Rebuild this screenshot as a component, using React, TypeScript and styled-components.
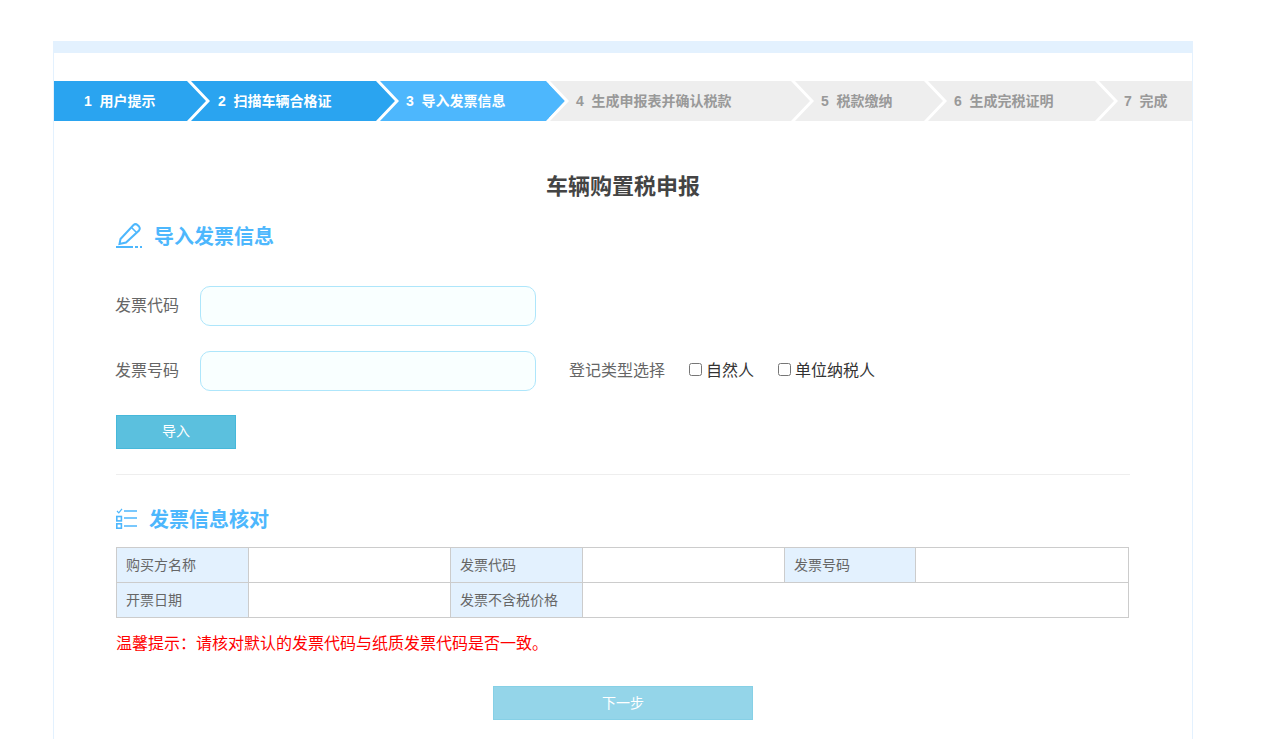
import React from "react";
import styled, { createGlobalStyle } from "styled-components";

const GlobalStyle = createGlobalStyle`
  html, body {
    margin: 0;
    padding: 0;
    background: #fff;
  }
  body {
    font-family: "Liberation Sans", "Noto Sans CJK SC", sans-serif;
    color: #333;
  }
`;

const Page = styled.div`
  box-sizing: border-box;
  width: 1140px;
  height: 698px;
  margin: 41px 0 0 53px;
  border: 1px solid #e3f1fe;
  border-width: 0 1px;
  overflow: hidden;
`;

const TopBar = styled.div`
  height: 12px;
  margin: 0 -1px;
  background: #e3f1fe;
`;

const Steps = styled.div`
  display: flex;
  height: 40px;
  margin-top: 28px;
`;

const stepColors = { done: "#2aa4f0", active: "#4db7fd", todo: "#eeeeee" };

const Step = styled.div<{ $width: number; $state: keyof typeof stepColors; $pad: number; $last?: boolean }>`
  position: relative;
  box-sizing: border-box;
  flex: 0 0 ${(p) => p.$width}px;
  padding-left: ${(p) => p.$pad}px;
  background: ${(p) => stepColors[p.$state]};
  color: ${(p) => (p.$state === "todo" ? "#999" : "#fff")};
  font-size: 14px;
  font-weight: bold;
  line-height: 40px;
  white-space: pre;

  &::after {
    content: ${(p) => (p.$last ? "none" : '""')};
    position: absolute;
    z-index: 1;
    top: 0;
    right: -22px;
    width: 25px;
    height: 40px;
    background: #fff;
    clip-path: polygon(0 0, 4px 0, 23px 50%, 4px 100%, 0 100%, 19px 50%);
  }

  &::before {
    content: ${(p) => (p.$last ? "none" : '""')};
    position: absolute;
    z-index: 1;
    top: 0;
    right: -16px;
    width: 19px;
    height: 40px;
    background: ${(p) => stepColors[p.$state]};
    clip-path: polygon(0 0, 100% 50%, 0 100%);
  }
`;

const Content = styled.div`
  padding: 0 62px;
`;

const Title = styled.h1`
  margin: 51px 0 0;
  font-size: 22px;
  font-weight: bold;
  line-height: 30px;
  color: #444;
  text-align: center;
`;

const SectionHead = styled.div<{ $gap: number; $top: number }>`
  display: flex;
  align-items: center;
  gap: ${(p) => p.$gap}px;
  height: 30px;
  margin-top: ${(p) => p.$top}px;
`;

const SectionTitle = styled.h2`
  margin: 0;
  font-size: 20px;
  font-weight: bold;
  color: #4db7fd;
`;

const FormRow = styled.div<{ $top: number }>`
  display: flex;
  align-items: center;
  height: 40px;
  margin-top: ${(p) => p.$top}px;
`;

const FieldLabel = styled.label`
  flex: 0 0 85px;
  margin-left: -1px;
  margin-bottom: 4px;
  font-size: 16px;
  color: #666;
`;

const TextInput = styled.input`
  box-sizing: border-box;
  width: 336px;
  height: 40px;
  padding: 0 12px;
  background: #f9ffff;
  border: 1px solid #aee6fb;
  border-radius: 10px;
  outline: none;
`;

const TypeLabel = styled.span`
  margin: 0 24px 4px 33px;
  font-size: 16px;
  color: #666;
`;

const CheckLabel = styled.label`
  display: flex;
  align-items: center;
  margin: 0 24px 4px 0;
  font-size: 16px;
  color: #333;
`;

const CheckBox = styled.input`
  width: 13px;
  height: 13px;
  margin: 0 4px 0 0;
`;

const ActionButton = styled.button<{ $width: number; $muted?: boolean }>`
  display: block;
  box-sizing: border-box;
  width: ${(p) => p.$width}px;
  height: 34px;
  padding: 0 0 ${(p) => (p.$muted ? 3 : 5)}px;
  background: #5bc0de;
  border: 1px solid #46b8da;
  opacity: ${(p) => (p.$muted ? 0.65 : 1)};
  color: #fff;
  font-family: inherit;
  font-size: 14px;
`;

const ImportButton = styled(ActionButton)`
  margin-top: 24px;
`;

const NextButton = styled(ActionButton)`
  margin: 31px auto 0;
`;

const Divider = styled.hr`
  width: 1014px;
  height: 1px;
  margin: 25px 0 0;
  background: #eee;
  border: 0;
`;

const InfoTable = styled.table`
  width: 1012px;
  border-collapse: collapse;
  table-layout: fixed;
  margin-top: 14px;
  font-size: 14px;
  color: #666;

  td {
    box-sizing: border-box;
    height: 35px;
    padding: 0 9px 3px;
    border: 1px solid #ccc;
  }
`;

const LabelCell = styled.td`
  background: #e3f1fe;
`;

const Tip = styled.p`
  margin: 15px 0 0;
  font-size: 16px;
  line-height: 22px;
  color: #f00;
`;

const PenIcon = () => (
  <svg width="26" height="26" viewBox="0 0 26 26" fill="none" stroke="#4db7fd" strokeWidth="2">
    <path d="M4.5 17 L17.5 3 Q19.5 1.3 21.5 3 L23 4.5 Q24.5 6.5 23 8.5 L10 20.5 L3.5 22 Z" />
    <path d="M15.5 5.5 L20.5 10.5" strokeWidth="1.6" />
    <path d="M0 25 H17 M19 25 H22 M24 25 H26" />
  </svg>
);

const ListIcon = () => (
  <svg width="21" height="21" viewBox="0 0 21 21" fill="none" stroke="#4db7fd" strokeWidth="1.6">
    <path d="M1 3 L2.8 4.8 L6 0.8" strokeWidth="1.2" />
    <rect x="0.8" y="8.5" width="4.6" height="4.4" />
    <rect x="0.8" y="15.8" width="4.6" height="4.4" />
    <path d="M8 3 H21 M8 10 H21 M8 18 H21" />
  </svg>
);

const steps = [
  { n: 1, label: "用户提示", width: 136, state: "done", pad: 30 },
  { n: 2, label: "扫描车辆合格证", width: 189, state: "done", pad: 28 },
  { n: 3, label: "导入发票信息", width: 170, state: "active", pad: 27 },
  { n: 4, label: "生成申报表并确认税款", width: 245, state: "todo", pad: 27 },
  { n: 5, label: "税款缴纳", width: 133, state: "todo", pad: 27 },
  { n: 6, label: "生成完税证明", width: 171, state: "todo", pad: 27 },
  { n: 7, label: "完成", width: 94, state: "todo", pad: 26 },
] as const;

export default function App() {
  return (
    <Page>
      <GlobalStyle />
      <TopBar />
      <Steps>
        {steps.map((s, i) => (
          <Step key={s.n} $width={s.width} $state={s.state} $pad={s.pad} $last={i === steps.length - 1}>
            {`${s.n}  ${s.label}`}
          </Step>
        ))}
      </Steps>
      <Content>
        <Title>车辆购置税申报</Title>
        <SectionHead $gap={12} $top={18}>
          <PenIcon />
          <SectionTitle>导入发票信息</SectionTitle>
        </SectionHead>
        <FormRow $top={36}>
          <FieldLabel>发票代码</FieldLabel>
          <TextInput />
        </FormRow>
        <FormRow $top={25}>
          <FieldLabel>发票号码</FieldLabel>
          <TextInput />
          <TypeLabel>登记类型选择</TypeLabel>
          <CheckLabel>
            <CheckBox type="checkbox" />
            自然人
          </CheckLabel>
          <CheckLabel>
            <CheckBox type="checkbox" />
            单位纳税人
          </CheckLabel>
        </FormRow>
        <ImportButton $width={120}>导入</ImportButton>
        <Divider />
        <SectionHead $gap={12} $top={28}>
          <ListIcon />
          <SectionTitle>发票信息核对</SectionTitle>
        </SectionHead>
        <InfoTable>
          <colgroup>
            <col style={{ width: 132 }} />
            <col style={{ width: 202 }} />
            <col style={{ width: 132 }} />
            <col style={{ width: 202 }} />
            <col style={{ width: 131 }} />
            <col style={{ width: 213 }} />
          </colgroup>
          <tbody>
            <tr>
              <LabelCell>购买方名称</LabelCell>
              <td />
              <LabelCell>发票代码</LabelCell>
              <td />
              <LabelCell>发票号码</LabelCell>
              <td />
            </tr>
            <tr>
              <LabelCell>开票日期</LabelCell>
              <td />
              <LabelCell>发票不含税价格</LabelCell>
              <td colSpan={3} />
            </tr>
          </tbody>
        </InfoTable>
        <Tip>温馨提示：请核对默认的发票代码与纸质发票代码是否一致。</Tip>
        <NextButton $width={260} $muted>
          下一步
        </NextButton>
      </Content>
    </Page>
  );
}
